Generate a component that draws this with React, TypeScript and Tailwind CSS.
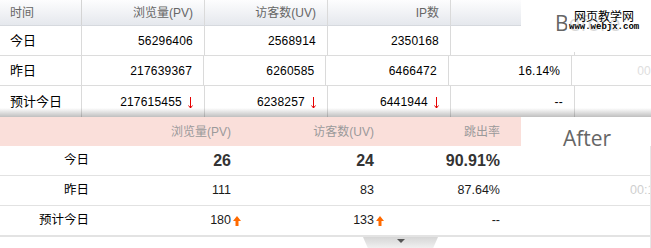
const font = "font-['Liberation_Sans','Noto_Sans_CJK_SC',sans-serif]";

function DownArrow() {
  return (
    <svg width="5" height="12" viewBox="0 0 5 12" className="shrink-0 mt-[3px]">
      <path d="M2.5 0V11M0.5 8.5L2.5 11L4.5 8.5" stroke="#e60000" fill="none" strokeWidth="1" />
    </svg>
  );
}

function UpArrow() {
  return (
    <svg width="8" height="10" viewBox="0 0 8 10" className="ml-[2px] -mr-[10px] shrink-0">
      <path d="M4 0L8 5H5.5V10H2.5V5H0Z" fill="#ff6a00" />
    </svg>
  );
}

const beforeRows = [
  { label: "今日", pv: "56296406", uv: "2568914", ip: "2350168", rate: "", tail: "", arrow: false },
  { label: "昨日", pv: "217639367", uv: "6260585", ip: "6466472", rate: "16.14%", tail: "00", arrow: false },
  { label: "预计今日", pv: "217615455", uv: "6238257", ip: "6441944", rate: "--", tail: "", arrow: true },
];

const afterRows = [
  { label: "今日", pv: "26", uv: "24", rate: "90.91%", tail: "", bold: true, arrow: false },
  { label: "昨日", pv: "111", uv: "83", rate: "87.64%", tail: "00:1", bold: false, arrow: false },
  { label: "预计今日", pv: "180", uv: "133", rate: "--", tail: "", bold: false, arrow: true },
];

function BeforeTable() {
  const cell = "flex items-center justify-end gap-[6px] pr-[11px] border-r border-[#dadada]";
  return (
    <div className="relative h-[117px] overflow-hidden">
      {/* header */}
      <div className="flex h-[26px] border-b border-[#d6d9de] bg-gradient-to-b from-[#fdfdfe] to-[#e5e8ed] text-[12px] text-[#666]">
        <div className="w-[82px] flex items-center pl-[10px] border-r border-[#d4d4d4]">时间</div>
        <div className={`w-[123px] ${cell} border-[#d4d4d4]`}>浏览量(PV)</div>
        <div className={`w-[123px] ${cell} border-[#d4d4d4]`}>访客数(UV)</div>
        <div className={`w-[123px] ${cell} border-[#d4d4d4]`}>IP数</div>
        <div className="flex-1" />
      </div>
      {beforeRows.map((r, i) => (
        <div
          key={r.label}
          className={`flex text-[12px] tracking-[0.2px] text-black ${i < 2 ? "h-[30px] border-b border-[#dcdcdc]" : "h-[31px]"}`}
        >
          <div className="w-[82px] flex items-center pl-[10px] border-r border-[#dadada] text-[13px] tracking-normal">{r.label}</div>
          <div className={`w-[123px] ${cell}`}>
            {r.pv}
            {r.arrow && <DownArrow />}
          </div>
          <div className={`w-[123px] ${cell}`}>
            {r.uv}
            {r.arrow && <DownArrow />}
          </div>
          <div className={`w-[123px] ${cell}`}>
            {r.ip}
            {r.arrow && <DownArrow />}
          </div>
          <div className={`w-[124px] ${cell}`}>{r.rate}</div>
          <div className="flex-1 flex items-center pl-[65px] text-[#dedede] whitespace-nowrap">{r.tail}</div>
        </div>
      ))}

      {/* Before label with watermark */}
      <div className="absolute left-[521px] top-0 w-[130px] h-[52px] bg-white">
        <div className="absolute left-[34px] top-[13px] text-[21px] leading-none text-[#666] font-['Open_Sans',sans-serif]">
          Before
        </div>
        <div className="absolute left-[46px] top-[8px] flex flex-col items-center bg-white/75 px-[2px]">
          <span className="text-[12px] leading-[15px] text-black font-['Noto_Sans_CJK_SC',sans-serif]">网页教学网</span>
          <span className="text-[9px] leading-[9px] font-bold text-black font-['Liberation_Mono',monospace]">www.webjx.com</span>
        </div>
      </div>

      {/* page shadow */}
      <div className="absolute inset-x-0 bottom-0 h-[9px] bg-gradient-to-b from-black/0 to-black/25" />
    </div>
  );
}

function AfterTable() {
  const cell = "flex items-center justify-end pr-[11px]";
  return (
    <div className="relative">
      <div className="flex h-[29px] text-[12px] text-[#9a9a9a]">
        <div className="w-[521px] flex bg-[#fadfda]">
          <div className="w-[100px]" />
          <div className={`w-[142px] ${cell}`}>浏览量(PV)</div>
          <div className={`w-[143px] ${cell}`}>访客数(UV)</div>
          <div className={`w-[126px] ${cell}`}>跳出率</div>
        </div>
        <div className="flex-1" />
      </div>
      <div className="border-r border-[#e6e6e6]">
        {afterRows.map((r, i) => (
          <div
            key={r.label}
            className={`flex text-[12.5px] text-[#1a1a1a] ${i < 2 ? "h-[30px] border-b border-[#e2e2e2]" : "h-[31px] border-b-2 border-[#e3e3e3]"}`}
          >
            <div className={`w-[100px] ${cell} text-black`}>{r.label}</div>
            <div className={`w-[142px] ${cell} ${r.bold ? "text-[16px] font-bold text-[#333]" : ""}`}>
              {r.pv}
              {r.arrow && <UpArrow />}
            </div>
            <div className={`w-[143px] ${cell} ${r.bold ? "text-[16px] font-bold text-[#333]" : ""}`}>
              {r.uv}
              {r.arrow && <UpArrow />}
            </div>
            <div className={`w-[126px] ${cell} ${r.bold ? "text-[16px] font-bold text-[#333]" : ""}`}>{r.rate}</div>
            <div className="flex-1 flex items-center pl-[119px] text-[#cfcfcf] whitespace-nowrap overflow-hidden">{r.tail}</div>
          </div>
        ))}
        <div className="h-[12px]">
          <div className="ml-[363px] w-[75px] h-[12px] flex justify-center pt-[2px] bg-gradient-to-b from-[#d6d6d6] to-[#f2f2f2] [clip-path:polygon(0_0,100%_0,93%_100%,7%_100%)]">
            <svg width="8" height="4" viewBox="0 0 8 4">
              <path d="M0 0H8L4 4Z" fill="#555" />
            </svg>
          </div>
        </div>
      </div>

      <div className="absolute left-[563px] top-[11px] text-[21px] leading-none text-[#666] font-['Open_Sans',sans-serif]">
        After
      </div>
    </div>
  );
}

export default function App() {
  return (
    <div className={`w-[651px] h-[248px] overflow-hidden bg-white ${font}`}>
      <BeforeTable />
      <AfterTable />
    </div>
  );
}
